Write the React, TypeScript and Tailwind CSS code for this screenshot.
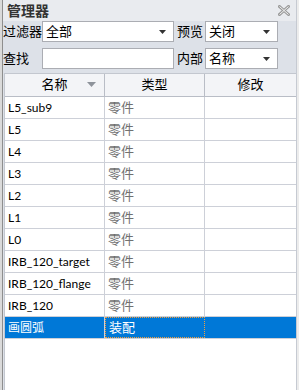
const rows = [
  { name: 'L5_sub9', type: '零件' },
  { name: 'L5', type: '零件' },
  { name: 'L4', type: '零件' },
  { name: 'L3', type: '零件' },
  { name: 'L2', type: '零件' },
  { name: 'L1', type: '零件' },
  { name: 'L0', type: '零件' },
  { name: 'IRB_120_target', type: '零件' },
  { name: 'IRB_120_flange', type: '零件' },
  { name: 'IRB_120', type: '零件' },
  { name: '画圆弧', type: '装配', selected: true },
];

const font = { fontFamily: 'Lato, "Noto Sans CJK SC", sans-serif' };

function Arrow() {
  return (
    <svg width="7" height="4" viewBox="0 0 7 4" className="shrink-0">
      <path d="M0 0h7L3.5 4z" fill="#333" />
    </svg>
  );
}

function Select({ value, className }: { value: string; className: string }) {
  return (
    <div
      className={`flex h-[21px] items-center justify-between border border-[#abadb3] bg-white pl-[3px] pr-[7px] leading-none text-black ${className}`}
    >
      <span>{value}</span>
      <Arrow />
    </div>
  );
}

export default function App() {
  return (
    <div
      className="flex h-[390px] w-[299px] overflow-hidden bg-[#f3f3f3] text-[13px]"
      style={font}
    >
      <div className="w-[2px] bg-[#dadada]" />
      <div className="w-[1px] bg-[#8e8e8e]" />
      <div className="flex w-[294px] flex-col border-r border-[#c6cad2] bg-[#dde1e8]">
        <div className="flex h-[21px] items-center justify-between bg-[#e9ebef] pl-[4px] pr-[6px]">
          <span className="text-[14px] font-bold text-[#333]">管理器</span>
          <svg width="12" height="11" viewBox="0 0 12 11">
            <path d="M1.5 1.5l9 8M10.5 1.5l-9 8" stroke="#9a9a9a" strokeWidth="3" strokeLinecap="square" />
            <path d="M1.5 1.5l9 8M10.5 1.5l-9 8" stroke="#f4f4f4" strokeWidth="1" />
          </svg>
        </div>

        <div className="flex h-[21px] items-center">
          <span className="w-[39px] text-black">过滤器</span>
          <Select value="全部" className="w-[132px]" />
          <span className="ml-[3px] w-[28px] text-black">预览</span>
          <Select value="关闭" className="w-[73px]" />
        </div>

        <div className="mt-[6px] flex h-[21px] items-center">
          <span className="w-[39px] text-black">查找</span>
          <div className="h-[21px] w-[132px] border border-[#abadb3] bg-white" />
          <span className="ml-[3px] w-[28px] text-black">内部</span>
          <Select value="名称" className="w-[73px]" />
        </div>

        <div className="ml-[1px] mt-[4px] flex flex-1 flex-col border-l border-t border-[#c3c7cf] bg-white">
          <div className="flex h-[23px] border-b border-[#b9bdc6] bg-[#f3f4f7] text-black">
            <div className="relative flex w-[100px] items-center justify-center border-r border-[#b9bdc6]">
              名称
              <svg width="9" height="5" viewBox="0 0 9 5" className="absolute right-[8px] top-[8px]">
                <path d="M0 0h9L4.5 5z" fill="#8e939b" />
              </svg>
            </div>
            <div className="flex w-[100px] items-center justify-center border-r border-[#b9bdc6]">类型</div>
            <div className="flex flex-1 items-center justify-center">修改</div>
          </div>
          {rows.map((r) => (
            <div
              key={r.name}
              className={`flex h-[22px] border-b border-[#cdd0d8] ${r.selected ? 'bg-[#0078d7] text-white' : 'text-black'}`}
            >
              <div className="flex w-[100px] items-center border-r border-[#cdd0d8] pl-[3px] text-[12px]">{r.name}</div>
              <div
                className={`flex w-[100px] items-center border-r pl-[3px] ${
                  r.selected ? 'border border-dotted border-[#f0a040] text-white' : 'border-[#cdd0d8] text-[#707070]'
                }`}
              >
                {r.type}
              </div>
              <div className="flex-1" />
            </div>
          ))}
        </div>
      </div>
      <div className="w-[2px] bg-[#ececec]" />
    </div>
  );
}
